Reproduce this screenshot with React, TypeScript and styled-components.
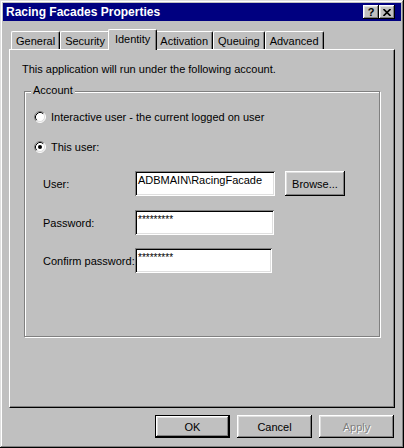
import React from "react";
import styled, { createGlobalStyle, css } from "styled-components";

const GlobalStyle = createGlobalStyle`
  html, body { margin: 0; padding: 0; background: #c0c0c0; }
  body {
    font-family: "Liberation Sans", Arial, sans-serif;
    font-size: 11px;
    color: #000;
  }
`;

const Window = styled.div`
  width: 404px;
  height: 448px;
  box-sizing: border-box;
  background: #c0c0c0;
  padding: 3px;
  box-shadow: inset -1px -1px #000, inset 1px 1px #dfdfdf,
    inset -2px -2px #808080, inset 2px 2px #fff;
  display: flex;
  flex-direction: column;
`;

const TitleBar = styled.div`
  height: 18px;
  flex: none;
  background: #000080;
  color: #fff;
  display: flex;
  align-items: center;
  padding: 0 6px 0 3px;
  font-weight: bold;
  font-size: 12px;
`;

const Title = styled.span`
  flex: 1;
  white-space: nowrap;
`;

const CaptionButton = styled.div`
  width: 16px;
  height: 14px;
  box-sizing: border-box;
  background: #c0c0c0;
  color: #000;
  display: flex;
  align-items: center;
  justify-content: center;
  font-size: 11px;
  font-weight: bold;
  box-shadow: inset -1px -1px #000, inset 1px 1px #fff,
    inset -2px -2px #808080, inset 2px 2px #dfdfdf;
`;

const Body = styled.div`
  flex: 1;
  display: flex;
  flex-direction: column;
  padding: 8px 6px 0 6px;
`;

const TabRow = styled.div`
  position: relative;
  z-index: 1;
  display: flex;
  align-items: flex-end;
  height: 20px;
  padding-left: 2px;
`;

const Tab = styled.div<{ $active?: boolean }>`
  box-sizing: border-box;
  height: 18px;
  padding: 0 4px;
  display: flex;
  align-items: center;
  white-space: nowrap;
  background: #c0c0c0;
  border-top: 1px solid #fff;
  border-left: 1px solid #fff;
  border-right: 1px solid #000;
  border-radius: 2px 2px 0 0;
  box-shadow: inset -1px 0 #808080;
  ${(p) =>
    p.$active &&
    css`
      position: relative;
      z-index: 2;
      height: 21px;
      margin: 0 -2px -1px -2px;
      padding: 0 6px 3px 6px;
    `}
`;

const Panel = styled.div`
  position: relative;
  height: 359px;
  box-sizing: border-box;
  flex: none;
  border-top: 1px solid #fff;
  border-left: 1px solid #fff;
  border-right: 1px solid #000;
  border-bottom: 1px solid #000;
  box-shadow: inset -1px -1px #808080;
  padding: 13px 12px 0 12px;
`;

const Intro = styled.div`
  line-height: 13px;
  white-space: nowrap;
`;

const Group = styled.div`
  position: relative;
  box-sizing: border-box;
  margin: 15px 0 0 2px;
  width: 356px;
  height: 246px;
  border: 1px solid #808080;
  box-shadow: inset 1px 1px #fff, 1px 1px #fff;
  padding: 18px 0 0 9px;
`;

const Legend = styled.span`
  position: absolute;
  top: -8px;
  left: 6px;
  padding: 0 2px;
  line-height: 13px;
  background: #c0c0c0;
`;

const RadioRow = styled.label<{ $gap?: number }>`
  display: flex;
  align-items: center;
  height: 14px;
  gap: 5px;
  margin-top: ${(p) => p.$gap ?? 0}px;
  line-height: 13px;
  white-space: nowrap;
`;

const FieldRow = styled.div<{ $gap: number }>`
  display: flex;
  align-items: center;
  height: 25px;
  margin: ${(p) => p.$gap}px 0 0 9px;
`;

const FieldLabel = styled.span`
  width: 92px;
  flex: none;
  white-space: nowrap;
`;

const TextBox = styled.div<{ $w: number }>`
  box-sizing: border-box;
  width: ${(p) => p.$w}px;
  height: 25px;
  background: #fff;
  padding: 3px 3px;
  line-height: 13px;
  white-space: nowrap;
  overflow: hidden;
  box-shadow: inset 1px 1px #808080, inset -1px -1px #fff,
    inset 2px 2px #000, inset -2px -2px #dfdfdf;
`;

const Masked = styled.span`
  font-size: 10px;
  letter-spacing: 0px;
`;

const PushButton = styled.div<{ $w: number; $h: number; $default?: boolean; $disabled?: boolean }>`
  box-sizing: border-box;
  width: ${(p) => p.$w}px;
  height: ${(p) => p.$h}px;
  flex: none;
  display: flex;
  align-items: center;
  justify-content: center;
  background: #c0c0c0;
  white-space: nowrap;
  box-shadow: inset -1px -1px #000, inset 1px 1px #fff,
    inset -2px -2px #808080, inset 2px 2px #dfdfdf;
  ${(p) =>
    p.$default &&
    css`
      border: 1px solid #000;
    `}
  ${(p) =>
    p.$disabled &&
    css`
      color: #808080;
      text-shadow: 1px 1px 0 #fff;
    `}
`;

const BrowseButton = styled(PushButton)`
  margin-left: 10px;
`;

const ButtonRow = styled.div`
  display: flex;
  justify-content: flex-end;
  gap: 7px;
  margin-top: 7px;
  padding-right: 1px;
`;

const Radio: React.FC<{ checked?: boolean }> = ({ checked }) => (
  <svg width="12" height="12" viewBox="0 0 12 12">
    <circle cx="6" cy="6" r="5" fill="#fff" />
    <path d="M2.11 9.89 A5.5 5.5 0 0 1 9.89 2.11" stroke="#808080" fill="none" />
    <path d="M9.89 2.11 A5.5 5.5 0 0 1 2.11 9.89" stroke="#fff" fill="none" />
    <path d="M2.82 9.18 A4.5 4.5 0 0 1 9.18 2.82" stroke="#000" fill="none" />
    <path d="M9.18 2.82 A4.5 4.5 0 0 1 2.82 9.18" stroke="#dfdfdf" fill="none" />
    {checked && <circle cx="6" cy="6" r="2" fill="#000" />}
  </svg>
);

const CloseGlyph = () => (
  <svg width="8" height="7" viewBox="0 0 8 7">
    <path d="M0.5 0 L7.5 7 M7.5 0 L0.5 7" stroke="#000" strokeWidth="1.6" />
  </svg>
);

const tabs = ["General", "Security", "Identity", "Activation", "Queuing", "Advanced"];

export default function App() {
  return (
    <>
      <GlobalStyle />
      <Window>
        <TitleBar>
          <Title>Racing Facades Properties</Title>
          <CaptionButton>?</CaptionButton>
          <CaptionButton>
            <CloseGlyph />
          </CaptionButton>
        </TitleBar>
        <Body>
          <TabRow>
            {tabs.map((t) => (
              <Tab key={t} $active={t === "Identity"}>
                {t}
              </Tab>
            ))}
          </TabRow>
          <Panel>
            <Intro>This application will run under the following account.</Intro>
            <Group>
              <Legend>Account</Legend>
              <RadioRow>
                <Radio />
                Interactive user - the current logged on user
              </RadioRow>
              <RadioRow $gap={16}>
                <Radio checked />
                This user:
              </RadioRow>
              <FieldRow $gap={17}>
                <FieldLabel>User:</FieldLabel>
                <TextBox $w={140}>ADBMAIN\RacingFacade</TextBox>
                <BrowseButton $w={60} $h={25}>Browse...</BrowseButton>
              </FieldRow>
              <FieldRow $gap={14}>
                <FieldLabel>Password:</FieldLabel>
                <TextBox $w={139}>
                  <Masked>*********</Masked>
                </TextBox>
              </FieldRow>
              <FieldRow $gap={13}>
                <FieldLabel>Confirm password:</FieldLabel>
                <TextBox $w={137}>
                  <Masked>*********</Masked>
                </TextBox>
              </FieldRow>
            </Group>
          </Panel>
          <ButtonRow>
            <PushButton $w={75} $h={23} $default>OK</PushButton>
            <PushButton $w={75} $h={23}>Cancel</PushButton>
            <PushButton $w={75} $h={23} $disabled>Apply</PushButton>
          </ButtonRow>
        </Body>
      </Window>
    </>
  );
}
